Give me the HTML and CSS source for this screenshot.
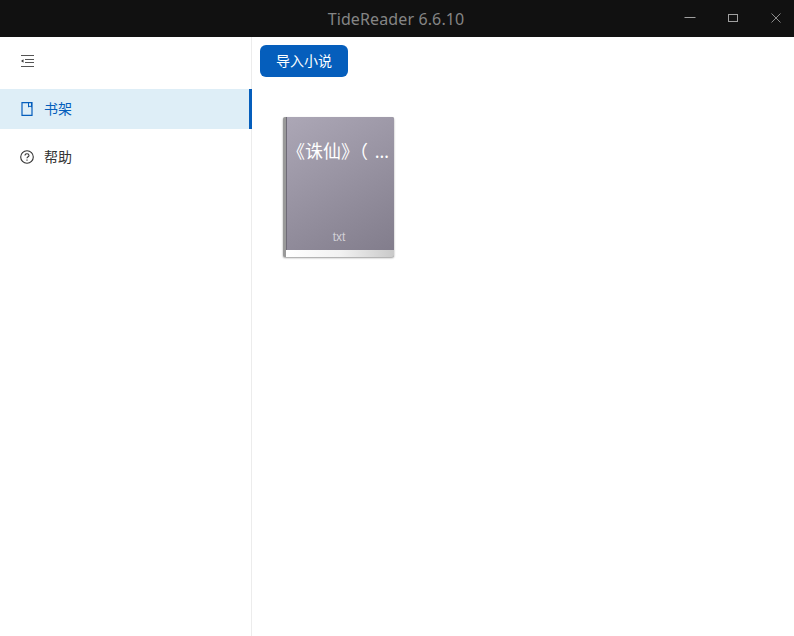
FILE: index.html
```html
<!DOCTYPE html>
<html lang="zh-CN">
<head>
    <meta charset="UTF-8">
    <title>TideReader 6.6.10</title>
    <link rel="stylesheet" href="styles.css">
</head>
<body>
    <div class="title-bar">
        <span class="title-text">TideReader 6.6.10</span>
        <div class="win-controls">
            <span class="win-btn">
                <svg width="12" height="12" viewBox="0 0 12 12"><path d="M0.5 5.5H11.5" stroke="#a0a0a0" fill="none"/></svg>
            </span>
            <span class="win-btn">
                <svg width="12" height="12" viewBox="0 0 12 12"><rect x="1.5" y="2.5" width="9" height="7" stroke="#a0a0a0" fill="none"/></svg>
            </span>
            <span class="win-btn">
                <svg width="12" height="12" viewBox="0 0 12 12"><path d="M1.5 1.5L10.5 10.5M10.5 1.5L1.5 10.5" stroke="#8a8a8a" fill="none"/></svg>
            </span>
        </div>
    </div>
    <div class="app-body">
        <div class="sidebar">
            <div class="collapse-row">
                <svg width="14" height="14" viewBox="0 0 14 14" fill="none" stroke="#333" stroke-width="1">
                    <path d="M1 1.5H14M5 5.5H14M5 8.5H14M1 12.5H14" stroke="#555"/>
                    <path d="M1 7L3.5 5.2V8.8Z" fill="#333" stroke="none"/>
                </svg>
            </div>
            <div class="menu-item active">
                <svg width="14" height="14" viewBox="0 0 14 14" fill="none" stroke="#055ebc" stroke-width="1.2">
                    <path d="M2 .7H12V13.3H2Z"/>
                    <path d="M8.5 .7V5L10 4L11.5 5V.7" stroke-width="1"/>
                </svg>
                <span class="menu-label">书架</span>
            </div>
            <div class="menu-item">
                <svg width="14" height="14" viewBox="0 0 14 14" fill="none" stroke="#333" stroke-width="1.1">
                    <circle cx="7" cy="7" r="6.3"/>
                    <path d="M5 5.6C5 4.4 5.9 3.7 7 3.7C8.1 3.7 9 4.4 9 5.4C9 6.7 7 6.8 7 8.3"/>
                    <path d="M7 9.5V10.7"/>
                </svg>
                <span class="menu-label">帮助</span>
            </div>
        </div>
        <div class="main">
            <button class="import-btn"><span class="btn-label">导入小说</span></button>
            <div class="shelf">
                <div class="book">
                    <div class="book-cover">
                        <div class="book-name">《诛仙》（ …</div>
                        <div class="book-type">txt</div>
                    </div>
                    <div class="book-pages"></div>
                </div>
            </div>
        </div>
    </div>
</body>
</html>
```

FILE: styles.css
```css
html, body {
    margin: 0;
    height: 100%;
    overflow: hidden;
}
body {
    font-family: "Noto Sans", "Noto Sans CJK SC", sans-serif;
    background: #fff;
    color: #333;
    display: flex;
    flex-direction: column;
}
.title-bar {
    height: 37px;
    flex-shrink: 0;
    background: #111;
    position: relative;
    display: flex;
    align-items: center;
    justify-content: center;
}
.title-text {
    color: #858585;
    font-size: 16px;
    letter-spacing: 0.12px;
    margin-right: 2px;
}
.win-controls {
    position: absolute;
    top: 0;
    right: 0;
    display: flex;
}
.win-btn {
    width: 43px;
    height: 35px;
    display: flex;
    align-items: center;
    justify-content: center;
    position: relative;
    left: 3px;
}
.app-body {
    flex: 1;
    display: flex;
}
.sidebar {
    width: 251px;
    border-right: 1px solid #ececec;
    flex-shrink: 0;
}
.collapse-row {
    height: 48px;
    padding-left: 20px;
    display: flex;
    align-items: center;
}
.menu-item {
    height: 40px;
    margin-top: 8px;
    padding-left: 20px;
    display: flex;
    align-items: center;
    gap: 10px;
    font-size: 14px;
    color: #333;
}
.menu-label {
    padding-bottom: 2px;
}
.menu-item.active {
    margin-top: 4px;
    margin-right: -1px;
    background: #deeef7;
    border-right: 3px solid #055ebc;
    color: #055ebc;
}
.main {
    flex: 1;
    padding: 8px;
}
.import-btn {
    display: block;
    width: 88px;
    height: 32px;
    border: none;
    border-radius: 6px;
    background: #055ebc;
    color: #fff;
    font-family: inherit;
    font-size: 14px;
    padding: 0 0 2px;
}
.shelf {
    display: flex;
    padding: 40px 0 0 23px;
}
.book {
    width: 111px;
    height: 140px;
    border-radius: 2px;
    overflow: hidden;
    box-shadow: 0 1px 2px rgba(0, 0, 0, 0.4);
    display: flex;
    flex-direction: column;
    background: #999;
    padding-left: 3px;
    box-sizing: border-box;
}
.book-cover {
    flex: 1;
    min-height: 0;
    background: linear-gradient(150deg, #aca7b6 0%, #827d8c 100%);
    border-left: 1px solid #6f6b77;
    display: flex;
    flex-direction: column;
    justify-content: space-between;
    align-items: center;
    padding: 22px 3px 6px 0;
}
.book-name {
    width: 100%;
    color: #fff;
    font-size: 18px;
    line-height: 24px;
    white-space: nowrap;
    word-spacing: 2px;
}
.book-type {
    color: #d2d0d6;
    font-family: "Liberation Sans", sans-serif;
    font-size: 12px;
    line-height: 14px;
}
.book-pages {
    height: 7px;
    flex-shrink: 0;
    background: linear-gradient(90deg, #fff 0%, #f2f2f2 50%, #c9c9c9 100%);
}
```
